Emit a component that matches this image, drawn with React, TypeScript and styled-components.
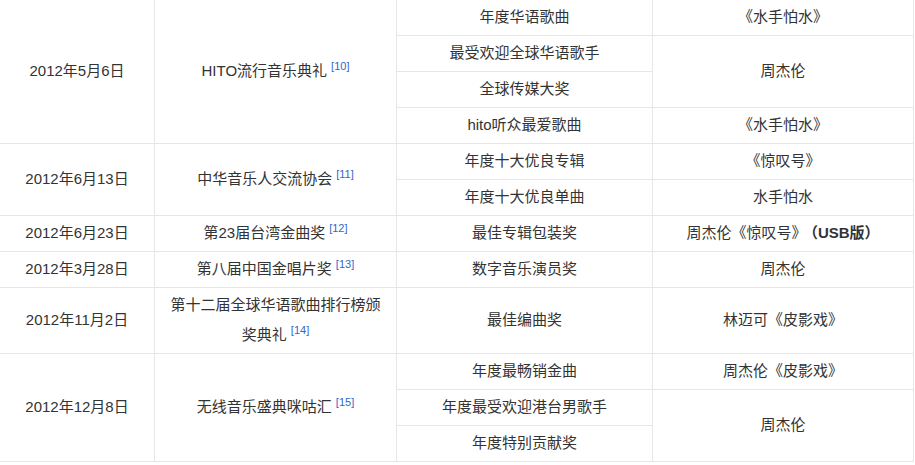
import React from "react";
import styled, { createGlobalStyle } from "styled-components";

const GlobalStyle = createGlobalStyle`
  html, body {
    margin: 0;
    padding: 0;
    background: #fff;
  }
  body {
    font-family: "Liberation Sans", Arial, "Noto Sans CJK SC", sans-serif;
    color: #333;
  }
`;

const Table = styled.table`
  width: 914px;
  margin: -1px 0 0 -1px;
  border-collapse: collapse;
  table-layout: fixed;
  font-size: 15px;
  line-height: 30px;
`;

const Col = styled.col<{ $w: number }>`
  width: ${(p) => p.$w}px;
`;

const Cell = styled.td`
  border: 1px solid #e6e6e6;
  padding: 2px 12px 3px;
  text-align: center;
  vertical-align: middle;
  word-break: break-all;
`;

const Ref = styled.sup`
  font-size: 11px;
  line-height: 0;
  color: #3366cc;
  vertical-align: 6px;
  margin-left: 4px;
`;

const Strong = styled.b`
  font-weight: bold;
  margin-left: 4px;
`;

interface Award {
  name: string;
  winner?: React.ReactNode;
  winnerSpan?: number;
}

interface Ceremony {
  date: string;
  title: string;
  ref: number;
  awards: Award[];
}

const columns = [155, 242, 256, 261];

const data: Ceremony[] = [
  {
    date: "2012年5月6日",
    title: "HITO流行音乐典礼",
    ref: 10,
    awards: [
      { name: "年度华语歌曲", winner: "《水手怕水》" },
      { name: "最受欢迎全球华语歌手", winner: "周杰伦", winnerSpan: 2 },
      { name: "全球传媒大奖" },
      { name: "hito听众最爱歌曲", winner: "《水手怕水》" },
    ],
  },
  {
    date: "2012年6月13日",
    title: "中华音乐人交流协会",
    ref: 11,
    awards: [
      { name: "年度十大优良专辑", winner: "《惊叹号》" },
      { name: "年度十大优良单曲", winner: "水手怕水" },
    ],
  },
  {
    date: "2012年6月23日",
    title: "第23届台湾金曲奖",
    ref: 12,
    awards: [
      {
        name: "最佳专辑包装奖",
        winner: (
          <>
            周杰伦《惊叹号》<Strong>（USB版）</Strong>
          </>
        ),
      },
    ],
  },
  {
    date: "2012年3月28日",
    title: "第八届中国金唱片奖",
    ref: 13,
    awards: [{ name: "数字音乐演员奖", winner: "周杰伦" }],
  },
  {
    date: "2012年11月2日",
    title: "第十二届全球华语歌曲排行榜颁奖典礼",
    ref: 14,
    awards: [{ name: "最佳编曲奖", winner: "林迈可《皮影戏》" }],
  },
  {
    date: "2012年12月8日",
    title: "无线音乐盛典咪咕汇",
    ref: 15,
    awards: [
      { name: "年度最畅销金曲", winner: "周杰伦《皮影戏》" },
      { name: "年度最受欢迎港台男歌手", winner: "周杰伦", winnerSpan: 2 },
      { name: "年度特别贡献奖" },
    ],
  },
];

const App = () => {
  return (
    <>
      <GlobalStyle />
      <Table>
        <colgroup>
          {columns.map((w, i) => (
            <Col key={i} $w={w} />
          ))}
        </colgroup>
        <tbody>
          {data.map((c) =>
            c.awards.map((a, i) => (
              <tr key={c.date + i}>
                {i === 0 && (
                  <>
                    <Cell rowSpan={c.awards.length}>{c.date}</Cell>
                    <Cell rowSpan={c.awards.length}>
                      {c.title}
                      <Ref>[{c.ref}]</Ref>
                    </Cell>
                  </>
                )}
                <Cell>{a.name}</Cell>
                {a.winner !== undefined && (
                  <Cell rowSpan={a.winnerSpan || 1}>{a.winner}</Cell>
                )}
              </tr>
            ))
          )}
        </tbody>
      </Table>
    </>
  );
};

export default App;
